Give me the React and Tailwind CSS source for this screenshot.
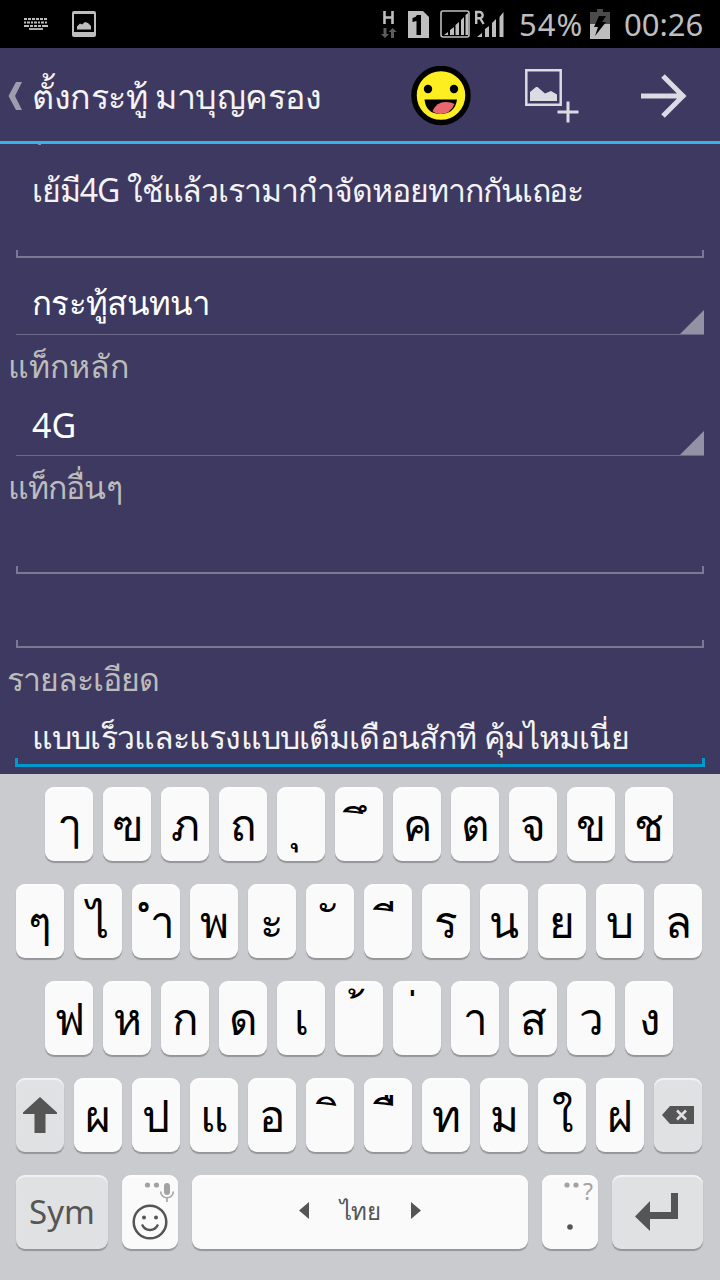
import clsx from 'clsx';

const keyRows = [
  ['ๅ', 'ฃ', 'ภ', 'ถ', '\u00a0ุ', '\u00a0ึ', 'ค', 'ต', 'จ', 'ข', 'ช'],
  ['ๆ', 'ไ', '\u00a0ำ', 'พ', 'ะ', '\u00a0ั', '\u00a0ี', 'ร', 'น', 'ย', 'บ', 'ล'],
  ['ฟ', 'ห', 'ก', 'ด', 'เ', '\u00a0้', '\u00a0่', 'า', 'ส', 'ว', 'ง'],
  ['shift', 'ผ', 'ป', 'แ', 'อ', '\u00a0ิ', '\u00a0ื', 'ท', 'ม', 'ใ', 'ฝ', 'delete'],
];

// combining marks sit off-centre on their blank base, each by its own amount
const markOffset = {
  '\u00a0ุ': 'pr-[13px]',
  '\u00a0ึ': 'pl-1',
  '\u00a0ี': 'pl-1.5',
  '\u00a0ื': 'pl-1.5',
  '\u00a0ิ': 'pl-2',
  '\u00a0้': 'pr-1',
  '\u00a0่': 'pr-2.5',
};

function StatusBar() {
  return (
    <div className="flex h-12 items-center bg-black text-[#bebebe]">
      <svg className="ml-6 h-3 w-6" viewBox="0 0 24 12" fill="none" stroke="currentColor" strokeWidth="2">
        <path d="M0 1h24" strokeDasharray="3 1" />
        <path d="M0 4.5h24" strokeDasharray="2 1 3 1" />
        <path d="M0 8h24" strokeDasharray="5 1 3 1 3 1 3 1 6" />
        <path d="M5 11h14" strokeWidth="1.8" />
      </svg>
      <svg className="ml-6 h-[26px] w-6" viewBox="0 0 24 26">
        <path fillRule="evenodd" fill="currentColor" d="M2 0h20a2 2 0 0 1 2 2v22a2 2 0 0 1-2 2H2a2 2 0 0 1-2-2V2a2 2 0 0 1 2-2Zm0 3v18h20V3Z" />
        <path fill="currentColor" d="M5 18.500v-3l3-3 2 1 3-2.500 3 1 3 3v3.500Z" />
      </svg>
      <svg className="ml-[284px] h-8 w-[126px]" viewBox="0 0 126 32">
        <path fill="none" stroke="#bebebe" strokeWidth="2.600" d="M4.500 3v13M12.500 3v13M4.500 9.500h8" />
        <path fill="#5c5c5c" d="M3.500 20h3v6h2.500l-4 4-4-4h2.500ZM11 30v-6H8.500l4.200-4 4 4H14v6Z" />
        <path fill="#bebebe" d="M28 3h15l6 6v21H28Z" />
        <path fill="#000" d="M37 7h4v20h-4.500V13l-4 1v-4q3.500-.5 4.500-3Z" />
        <rect x="61" y="3" width="28" height="26" rx="2" fill="none" stroke="#bebebe" strokeWidth="1.600" />
        <path fill="#bebebe" d="M64 27l4-3v3ZM70 27v-5l4-3v8ZM75.500 27v-10l3.500-3v13ZM81 27v-15l3-3v18ZM85.500 27v-20l2.500-2v22Z" />
        <path fill="none" stroke="#bebebe" strokeWidth="2.400" d="M96.200 16V4h3.300a2.700 2.700 0 0 1 0 6.300h-3M100 10l3.600 6" />
        <path fill="#bebebe" d="M97 29l5-4v4ZM105 29v-8l4-3v11ZM112 29v-14l4-4v18ZM119.500 29v-20l4-5v25Z" />
      </svg>
      <span className="ml-[13px] w-[66px] text-[31px] leading-none tracking-[1px] whitespace-nowrap">54%</span>
      <svg className="ml-[5px] h-[30px] w-5" viewBox="0 0 20 30">
        <path fill="#4b4b4b" d="M7 0h6v3h7v12H0V3h7Z" />
        <path fill="#bebebe" d="M0 15h20v15H0Z" />
        <path fill="#000" d="M9 7h7l-4 6h4L5 27l3-9H4Z" />
      </svg>
      <span className="ml-[14px] text-[31px] leading-none">00:26</span>
    </div>
  );
}

function ActionBar() {
  return (
    <header className="flex h-24 items-center border-b-[3px] border-[#33b5e5] pt-[2px]">
      <svg className="ml-2 h-7 w-[14px]" viewBox="0 0 14 28" fill="#9e9caf">
        <path d="M8 0h6L7 14l7 14H8L.5 14Z" />
      </svg>
      <h1 className="ml-[10px] w-[379px] text-[34px] leading-none tracking-[-0.5px] whitespace-nowrap text-[#f3f3f3]">ตั้งกระทู้ มาบุญครอง</h1>
      <svg className="h-[60px] w-[60px]" viewBox="0 0 60 60">
        <circle cx="30" cy="29.500" r="27" fill="#fcee21" stroke="#000" strokeWidth="5.500" />
        <circle cx="17" cy="23" r="4.200" />
        <circle cx="43" cy="23" r="4.200" />
        <path d="M13.500 33.500h32.500q-2 14.500-16.500 14.500T13.500 33.500Z" />
        <path fill="#e9686f" d="M21.500 45q4-9 13-9 6 0 9 2-4 10-14 10-5 0-8-3Z" />
      </svg>
      <svg className="ml-[54px] h-[54px] w-[54px]" viewBox="0 0 54 54" fill="none" stroke="#dcdbe3" strokeWidth="2.500">
        <path d="M1.300 1.300h34.400v34.400H1.300Z" />
        <path fill="#dcdbe3" stroke="none" d="M5 32v-9l6-5 1.500 0 7.500 6.500 6-2.500 6 3.500v6.500Z" />
        <path d="M43 32.500v21M32.500 43h21" strokeWidth="3" />
      </svg>
      <svg className="ml-[62px] h-[46px] w-[46px]" viewBox="0 0 46 46" fill="none" stroke="#dcdbe3" strokeWidth="5">
        <path d="M0 23h42M22 3l20 20-20 20" />
      </svg>
    </header>
  );
}

function EditField({ children, active, className }) {
  return (
    <div className={clsx('relative flex items-end whitespace-nowrap', className)}>
      <div
        className={clsx(
          'pointer-events-none absolute bottom-0',
          active ? 'inset-x-[15px] h-[9px] border-x-[3px] border-b-[3px] border-[#0099cc]' : 'inset-x-4 h-2 border-x-2 border-b-2 border-[#7b7893]',
        )}
      />
      {children}
    </div>
  );
}

function Spinner({ children, className }) {
  return (
    <div className={clsx('relative mx-4 flex items-end border-b border-[#6c698a] pl-4 text-white', className)}>
      {children}
      <svg className="absolute right-0 bottom-0 h-6 w-6" viewBox="0 0 24 24" fill="#9391a4">
        <path d="M24 0v24H0Z" />
      </svg>
    </div>
  );
}

function Key({ children, dark, className }) {
  return (
    <button
      type="button"
      className={clsx(
        'relative flex h-[74px] items-center justify-center rounded-[9px] shadow-[0_2px_1px_#949599,inset_0_2px_1px_rgba(255,255,255,0.6)]',
        dark ? 'bg-[#e0e1e3] text-[#555]' : 'bg-[#fafafa] text-black',
        className,
      )}
    >
      {children}
    </button>
  );
}

function KeyFace({ name }) {
  if (name === 'shift') {
    return (
      <svg className="h-9 w-[34px]" viewBox="0 0 34 36" fill="#555">
        <path d="M17 0l17 15.500v1.500H22.500v19h-11V17H0v-1.500Z" />
      </svg>
    );
  }
  if (name === 'delete') {
    return (
      <svg className="h-[18px] w-8" viewBox="0 0 32 18">
        <path fill="#555" d="M8 0h24v18H8L0 9Z" />
        <path fill="none" stroke="#e0e1e3" strokeWidth="2.500" d="M15 4.500l9 9M24 4.500l-9 9" />
      </svg>
    );
  }
  return <span className={clsx('pb-px text-[44px] leading-none whitespace-pre', markOffset[name])}>{name}</span>;
}

function Keyboard() {
  return (
    <div className="flex h-[506px] flex-col gap-[23px] bg-[#cacbcf] pt-[13px]">
      {keyRows.map((row) => (
        <div key={row[0]} className={clsx('flex gap-[10px]', row.length === 11 ? 'pl-[45px]' : 'pl-4')}>
          {row.map((name) => (
            <Key key={name} dark={name.length > 2} className="w-12">
              <KeyFace name={name} />
            </Key>
          ))}
        </div>
      ))}
      <div className="flex gap-[14px] pl-4">
        <Key dark className="w-[92px] text-[33px]">Sym</Key>
        <Key className="w-14">
          <svg className="h-[74px] w-14" viewBox="0 0 56 74" fill="none" stroke="#555">
            <g fill="#a3a3a3" stroke="none">
              <circle cx="25.500" cy="10" r="2.600" />
              <circle cx="34.500" cy="10" r="2.600" />
              <rect x="42" y="8" width="6" height="12" rx="3" />
            </g>
            <path stroke="#a3a3a3" strokeWidth="1.600" d="M38.700 16.500a6.300 6.300 0 0 0 12.600 0M45 23v4" />
            <circle cx="28" cy="47" r="16.300" strokeWidth="2.500" />
            <path strokeWidth="2.300" d="M20 49.500q2.500 5.500 8 5.500t8-5.500" />
            <circle cx="22" cy="42.500" r="2" fill="#555" stroke="none" />
            <circle cx="34" cy="42.500" r="2" fill="#555" stroke="none" />
          </svg>
        </Key>
        <Key className="w-[336px] gap-[29px] pb-[3px]">
          <svg className="h-[17px] w-[10px]" viewBox="0 0 10 17" fill="#555"><path d="M10 0v17L0 8.500Z" /></svg>
          <span className="w-11 text-[24px] leading-none tracking-[-0.7px] whitespace-nowrap text-[#555]">ไทย</span>
          <svg className="h-[17px] w-[10px]" viewBox="0 0 10 17" fill="#555"><path d="M0 0v17l10-8.500Z" /></svg>
        </Key>
        <Key className="w-14">
          <span className="absolute top-[5px] right-[5px] flex gap-1 text-[23px] leading-none text-[#a3a3a3]">
            <svg className="mt-[2px] h-[6px] w-[15px]" viewBox="0 0 15 6" fill="currentColor">
              <circle cx="3" cy="3" r="2.600" />
              <circle cx="12" cy="3" r="2.600" />
            </svg>
            ?
          </span>
          <svg className="mt-[29px] h-[6px] w-[6px]" viewBox="0 0 6 6" fill="#555"><circle cx="3" cy="3" r="2.800" /></svg>
        </Key>
        <Key dark className="w-[91px] pr-[2px]">
          <svg className="h-[38px] w-[43px]" viewBox="0 0 43 38" fill="#555">
            <path d="M36 0h7v26H15v12L0 23.500 15 8v11h21Z" />
          </svg>
        </Key>
      </div>
    </div>
  );
}

export default function App() {
  return (
    <div className="flex h-[1280px] w-[720px] flex-col overflow-hidden bg-[#3d3961] font-['Noto_Sans','Tahoma'] text-[32px] leading-[40px]">
      <StatusBar />
      <ActionBar />
      <main className="flex h-[630px] flex-col overflow-hidden">
        <EditField className="h-[114px] pb-12 pl-8 tracking-[-1.05px] text-[#f3f3f3]">
          {/* tail of the line scrolled under the action bar */}
          <span className="absolute top-0 left-[38px] h-px w-[3px] bg-[#8f8da3]" />
          เย้มี4G ใช้แล้วเรามากำจัดหอยทากกันเถอะ
        </EditField>
        <Spinner className="h-[77px] pb-[11px] text-[33px] tracking-[-0.7px]">กระทู้สนทนา</Spinner>
        <p className="h-11 pt-[11px] pl-2 text-[#bcbcbc]">แท็กหลัก</p>
        <Spinner className="h-[77px] pb-[10px] text-[34px]">4G</Spinner>
        <p className="h-11 pt-[11px] pl-2 tracking-[-0.9px] text-[#bcbcbc]">แท็กอื่นๆ</p>
        <EditField className="h-[74px]" />
        <EditField className="h-[74px]" />
        <p className="h-14 pt-[11px] pl-[7px] tracking-[-1px] text-[#bcbcbc]">รายละเอียด</p>
        <EditField active className="h-[63px] pb-[10px] pl-8 tracking-[-0.87px] text-[#f3f3f3]">แบบเร็วและแรงแบบเต็มเดือนสักที คุ้มไหมเนี่ย</EditField>
      </main>
      <Keyboard />
    </div>
  );
}
